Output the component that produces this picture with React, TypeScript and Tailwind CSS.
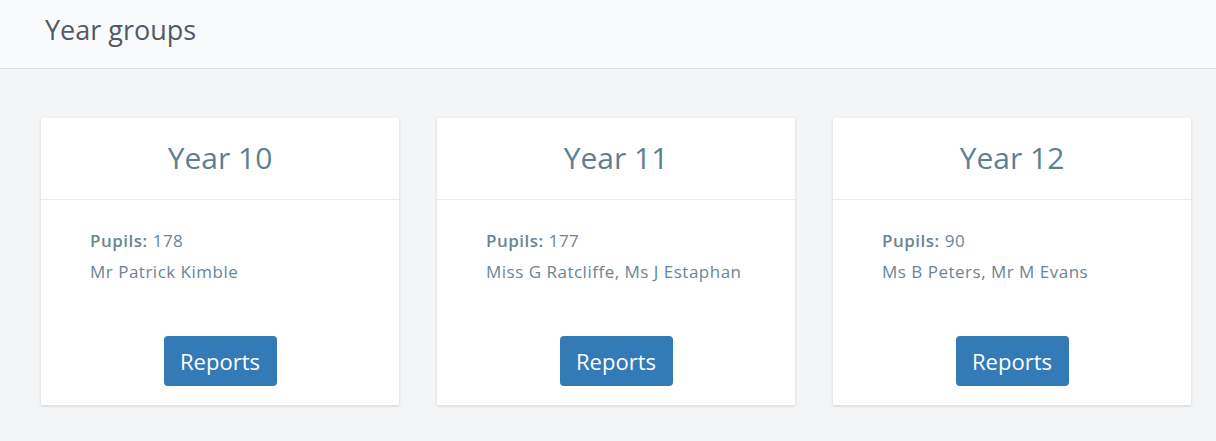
const groups = [
  { name: "Year 10", pupils: 178, staff: "Mr Patrick Kimble" },
  { name: "Year 11", pupils: 177, staff: "Miss G Ratcliffe, Ms J Estaphan" },
  { name: "Year 12", pupils: 90, staff: "Ms B Peters, Mr M Evans" }
];

export default function App() {
  return (
    <div className="flex h-[441px] w-[1216px] flex-col bg-[#f4f5f7] font-['Open_Sans',sans-serif]">
      <header className="flex h-[69px] shrink-0 items-center border-b border-[#dde1e5] bg-[#f9fafb] pl-[45px]">
        <h1 className="-mt-[8px] text-[27px] text-[#525b64]">Year groups</h1>
      </header>

      <div className="flex gap-[38px] pt-[49px] pl-[41px]">
        {groups.map((group) => (
          <div
            key={group.name}
            className="flex h-[287px] w-[358px] flex-col bg-white shadow-[0_1px_3px_rgba(0,0,0,0.15)]"
          >
            <div className="flex h-[82px] shrink-0 items-center justify-center border-b border-[#e6ebef]">
              <h2 className="-mt-[2px] text-[30px] text-[#5e7f90]">{group.name}</h2>
            </div>
            <div className="flex flex-1 flex-col px-[49px] pt-[27px] pb-[19px] text-[17px] leading-[28px] tracking-[0.5px] text-[#6b8593]">
              <p>
                <strong className="font-semibold">Pupils:</strong> {group.pupils}
              </p>
              <p className="mt-[3px]">{group.staff}</p>
              <div className="mt-auto flex justify-center">
                <button
                  type="button"
                  className="h-[50px] w-[113px] rounded-[4px] bg-[#337ab7] text-[22px] tracking-normal text-white"
                >
                  Reports
                </button>
              </div>
            </div>
          </div>
        ))}
      </div>
    </div>
  );
}
